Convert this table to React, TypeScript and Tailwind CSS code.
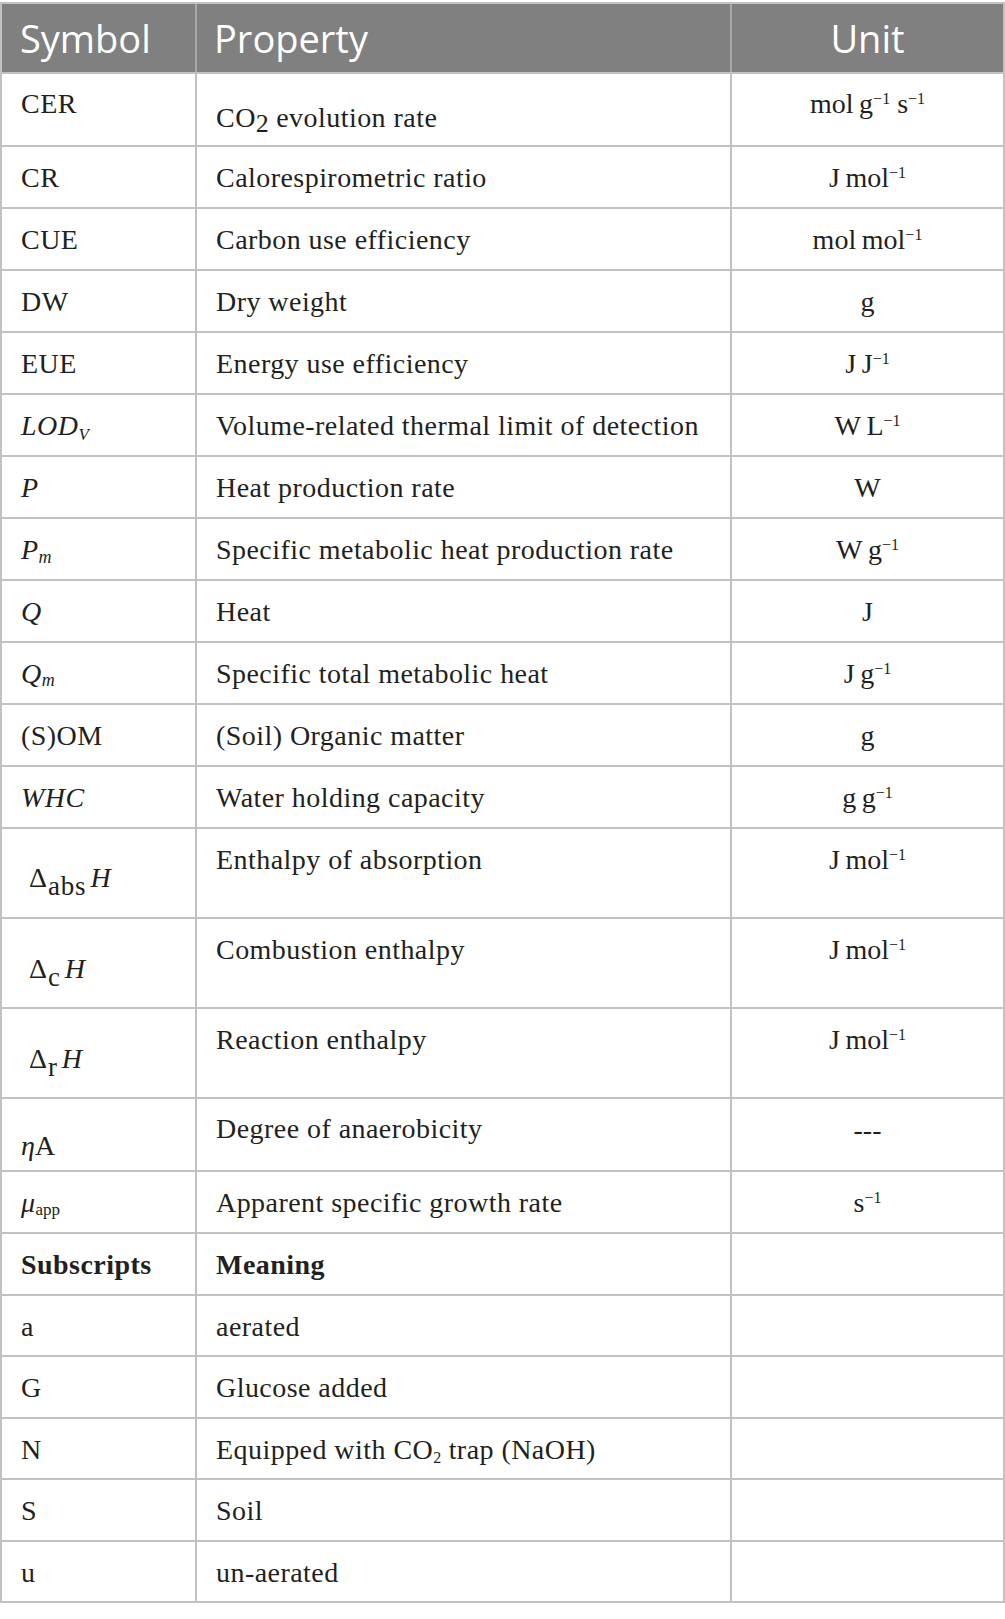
import type { ReactNode } from "react"

type Row = {
  sym: ReactNode
  prop: ReactNode
  unit?: ReactNode
  h: string
  symPt?: string
  propPt?: string
  unitPt?: string
  bold?: boolean
}

function Sup({ children }: { children: ReactNode }) {
  return <sup className="text-[16px] top-[-9px] tracking-normal">{children}</sup>
}

function Sub({ children, className = "" }: { children: ReactNode; className?: string }) {
  return <sub className={`tracking-normal ${className}`}>{children}</sub>
}

const T = "\u2009"
const M = "\u2212"

function Delta({ sub }: { sub: string }) {
  return (
    <span className="tracking-normal">
      Δ<sub className="text-[27px] bottom-[-8px] tracking-[0.8px] ml-[1px]">{sub}</sub>
      <span className="italic ml-[4px]">H</span>
    </span>
  )
}

const rows: Row[] = [
  {
    sym: "CER",
    prop: (
      <>
        CO<sub className="text-[26px] bottom-[-5px] tracking-normal">2</sub> evolution rate
      </>
    ),
    unit: (
      <>
        mol{T}g<Sup>{M}1</Sup> s<Sup>{M}1</Sup>
      </>
    ),
    h: "h-[71px]",
    symPt: "pt-[14px]",
    propPt: "pt-[28px]",
    unitPt: "pt-[14px]",
  },
  { sym: "CR", prop: "Calorespirometric ratio", unit: <>J{T}mol<Sup>{M}1</Sup></>, h: "h-[60px]" },
  { sym: "CUE", prop: "Carbon use efficiency", unit: <>mol{T}mol<Sup>{M}1</Sup></>, h: "h-[60px]" },
  { sym: "DW", prop: "Dry weight", unit: "g", h: "h-[60px]" },
  { sym: "EUE", prop: "Energy use efficiency", unit: <>J{T}J<Sup>{M}1</Sup></>, h: "h-[60px]" },
  {
    sym: (
      <span className="italic">
        LOD<Sub className="text-[17px] bottom-[-5px]">V</Sub>
      </span>
    ),
    prop: "Volume-related thermal limit of detection",
    unit: <>W{T}L<Sup>{M}1</Sup></>,
    h: "h-[60px]",
  },
  { sym: <span className="italic">P</span>, prop: "Heat production rate", unit: "W", h: "h-[60px]" },
  {
    sym: (
      <span className="italic">
        P<Sub className="text-[18px] bottom-[-4px]">m</Sub>
      </span>
    ),
    prop: "Specific metabolic heat production rate",
    unit: <>W{T}g<Sup>{M}1</Sup></>,
    h: "h-[60px]",
  },
  { sym: <span className="italic">Q</span>, prop: "Heat", unit: "J", h: "h-[60px]" },
  {
    sym: (
      <span className="italic">
        Q<Sub className="text-[18px] bottom-[-3px]">m</Sub>
      </span>
    ),
    prop: "Specific total metabolic heat",
    unit: <>J{T}g<Sup>{M}1</Sup></>,
    h: "h-[60px]",
  },
  { sym: "(S)OM", prop: "(Soil) Organic matter", unit: "g", h: "h-[60px]" },
  { sym: <span className="italic">WHC</span>, prop: "Water holding capacity", unit: <>g{T}g<Sup>{M}1</Sup></>, h: "h-[60px]" },
  {
    sym: <Delta sub="abs" />,
    prop: "Enthalpy of absorption",
    unit: <>J{T}mol<Sup>{M}1</Sup></>,
    h: "h-[88px]",
    symPt: "pt-[33px] pl-[27px]",
  },
  {
    sym: <Delta sub="c" />,
    prop: "Combustion enthalpy",
    unit: <>J{T}mol<Sup>{M}1</Sup></>,
    h: "h-[88px]",
    symPt: "pt-[34px] pl-[27px]",
  },
  {
    sym: <Delta sub="r" />,
    prop: "Reaction enthalpy",
    unit: <>J{T}mol<Sup>{M}1</Sup></>,
    h: "h-[88px]",
    symPt: "pt-[34px] pl-[27px]",
  },
  {
    sym: (
      <span className="tracking-normal">
        <span className="italic">η</span>A
      </span>
    ),
    prop: "Degree of anaerobicity",
    unit: "---",
    h: "h-[71px]",
    symPt: "pt-[31px] pl-[19px]",
    propPt: "pt-[14px]",
  },
  {
    sym: (
      <span>
        <span className="italic">μ</span>
        <Sub className="text-[17px] bottom-[-3px]">app</Sub>
      </span>
    ),
    prop: "Apparent specific growth rate",
    unit: <>s<Sup>{M}1</Sup></>,
    h: "h-[60px]",
  },
  { sym: "Subscripts", prop: "Meaning", h: "h-[60px]", bold: true },
  { sym: "a", prop: "aerated", h: "h-[59px]" },
  { sym: "G", prop: "Glucose added", h: "h-[60px]" },
  {
    sym: "N",
    prop: (
      <>
        Equipped with CO<Sub className="text-[16px] bottom-[-4px]">2</Sub> trap (NaOH)
      </>
    ),
    h: "h-[59px]",
  },
  { sym: "S", prop: "Soil", h: "h-[60px]" },
  { sym: "u", prop: "un-aerated", h: "h-[59px]" },
]

export default function App() {
  return (
    <div className="w-[1005px] min-h-[1619px] bg-white pt-[2px]">
      <div className="border-l-2 border-t-2 border-[#c2c2c2]">
        <div className="flex h-[70px] border-b-2 border-[#c2c2c2] bg-[#808080] font-['Open_Sans',sans-serif] text-[38px] leading-[68px] text-white">
          <div className="w-[195px] border-r-2 border-[#a8a8a8] pl-[18px]">Symbol</div>
          <div className="w-[535px] border-r-2 border-[#a8a8a8] pl-[17px]">Property</div>
          <div className="w-[273px] border-r-2 border-[#c2c2c2] text-center">Unit</div>
        </div>
        {rows.map((r, i) => (
          <div
            key={i}
            className={`flex box-content border-b-2 border-[#c2c2c2] font-['Liberation_Serif',serif] text-[28px] leading-[32px] tracking-[0.45px] text-[#231f20] ${r.h} ${r.bold ? "font-bold" : ""}`}
          >
            <div className={`w-[195px] shrink-0 border-r-2 border-[#c2c2c2] whitespace-nowrap ${r.symPt ?? "pt-[15px] pl-[19px]"} ${r.symPt && !r.symPt.includes("pl-") ? "pl-[19px]" : ""}`}>
              {r.sym}
            </div>
            <div className={`w-[535px] shrink-0 border-r-2 border-[#c2c2c2] pl-[19px] whitespace-nowrap ${r.propPt ?? "pt-[15px]"}`}>
              {r.prop}
            </div>
            <div className={`w-[273px] shrink-0 border-r-2 border-[#c2c2c2] text-center tracking-normal whitespace-nowrap ${r.unitPt ?? "pt-[15px]"}`}>
              {r.unit}
            </div>
          </div>
        ))}
      </div>
    </div>
  )
}
